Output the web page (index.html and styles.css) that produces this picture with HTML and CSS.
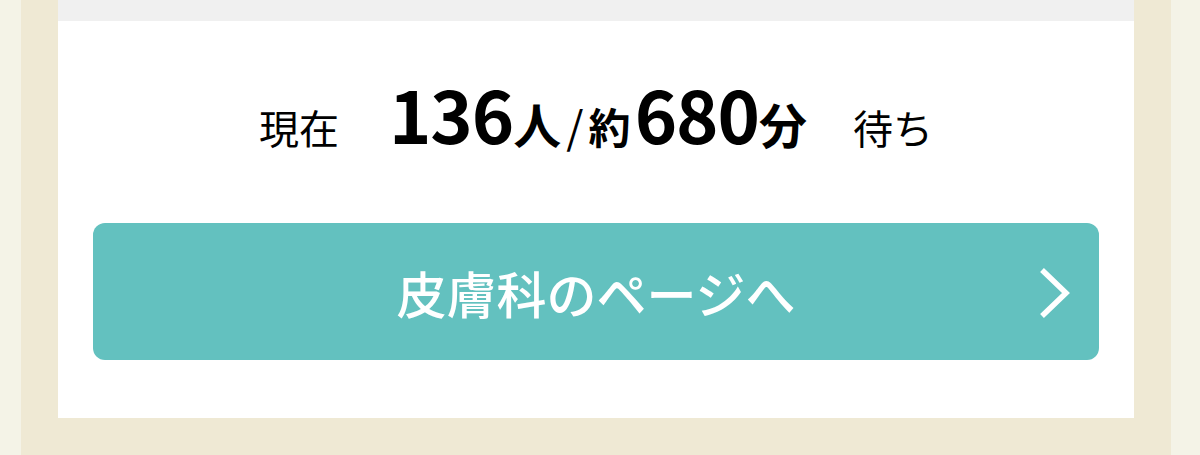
FILE: index.html
```html
<!DOCTYPE html>
<html lang="ja">
<head>
    <meta charset="UTF-8">
    <meta name="viewport" content="width=device-width, initial-scale=1.0">
    <title>待ち状況</title>
    <link rel="stylesheet" href="styles.css">
</head>
<body>
    <div class="frame">
        <div class="card">
            <div class="card-top"></div>

            <!-- Current queue -->
            <p class="wait-status">
                <span class="label">現在</span>
                <span class="count">
                    <span class="num">136</span><span class="unit">人</span><span class="slash">/</span><span class="approx">約</span><span class="num">680</span><span class="unit">分</span>
                </span>
                <span class="label">待ち</span>
            </p>

            <a class="dept-link" href="#">
                <span class="dept-text">皮膚科のページへ</span>
                <svg class="chevron" width="34" height="52" viewBox="0 0 34 52">
                    <polyline points="4,3 28,26 4,49" fill="none" stroke="#fff" stroke-width="5.5" />
                </svg>
            </a>
        </div>
    </div>
</body>
</html>
```

FILE: styles.css
```css
body {
    margin: 0;
    background-color: #f4f3e7;
    font-family: "Noto Sans CJK JP", "Noto Sans", sans-serif;
    color: #000;
}

.frame {
    margin: 0 29px 0 21px;
    padding: 0 37px 37px;
    background-color: #efe9d4;
}

.card {
    background-color: #fff;
    padding: 0 35px 58px;
}

/* grey band along the top edge */
.card-top {
    height: 21px;
    margin: 0 -35px;
    background-color: #f0f0f0;
}

.wait-status {
    display: flex;
    align-items: baseline;
    justify-content: center;
    margin: 0;
    padding-top: 56px;
    height: 146px;
    box-sizing: border-box;
    line-height: 1;
}

.label {
    font-size: 40px;
}

.count {
    margin: 0 46px 0 50px;
    font-weight: bold;
}

.num {
    font-size: 72px;
    letter-spacing: -1px;
}

.unit {
    font-size: 48px;
}

.slash {
    font-size: 44px;
    font-weight: normal;
    margin: 0 5px;
}

.approx {
    font-size: 42px;
    margin-right: 4px;
}

.dept-link {
    display: flex;
    align-items: center;
    justify-content: center;
    position: relative;
    margin-top: 56px;
    height: 137px;
    border-radius: 12px;
    background-color: #63c1bf;
    color: #fff;
    text-decoration: none;
}

.dept-text {
    font-size: 50px;
    font-weight: 500;
}

.chevron {
    position: absolute;
    right: 27px;
    top: 44px;
}
```
